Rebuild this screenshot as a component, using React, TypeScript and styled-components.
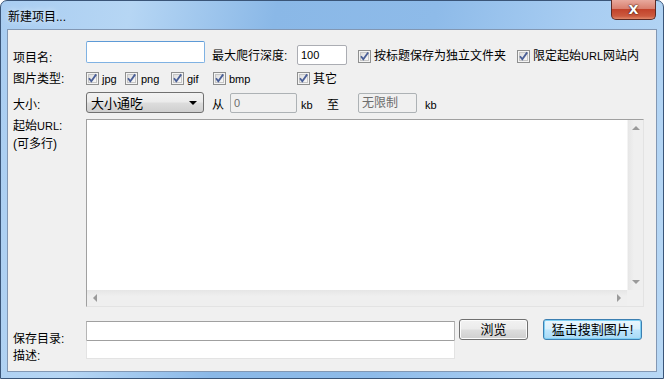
import React from "react";
import styled, { createGlobalStyle } from "styled-components";

const GlobalStyle = createGlobalStyle`
  html, body {
    margin: 0;
    padding: 0;
    overflow: hidden;
    background: #ffffff;
  }
  * { box-sizing: border-box; }
`;

const FONT = `"Liberation Sans", "Noto Sans CJK SC", sans-serif`;

const Window = styled.div`
  width: 664px;
  height: 379px;
  display: flex;
  flex-direction: column;
  padding: 0 6px 6px 6px;
  border: 1px solid #3a5578;
  border-radius: 7px 7px 0 0;
  background: linear-gradient(100deg, #a9cdf1 0%, #b6d6f4 18%, #8ab8e7 38%, #8ebbe9 60%, #a8cdf2 80%, #b8d8f5 100%);
  font-family: ${FONT};
  font-size: 12px;
  color: #000;
`;

const TitleBar = styled.div`
  height: 28px;
  display: flex;
  align-items: flex-start;
  padding-left: 1px;
`;

const Title = styled.span`
  margin-top: 9px;
  line-height: 14px;
  font-size: 12px;
  text-shadow: 0 0 6px rgba(255, 255, 255, 0.9);
`;

const CloseButton = styled.div`
  margin-left: auto;
  margin-top: -1px;
  margin-right: 1px;
  width: 45px;
  height: 20px;
  border: 1px solid #5c2a24;
  border-top: none;
  border-radius: 0 0 5px 5px;
  background: linear-gradient(#e8a99d 0%, #d9806f 45%, #c2432b 50%, #cc5a3f 85%, #e08a6c 100%);
  display: flex;
  align-items: center;
  justify-content: center;
  color: #fff;
  font-family: "DejaVu Sans", sans-serif;
  font-weight: bold;
  font-size: 13px;
  text-shadow: 0 0 1px #3b1510, 0 0 2px #3b1510;
`;

const Client = styled.div`
  flex: 1;
  background: #f0f0f0;
  border: 1px solid #8297b3;
  padding: 0 0 0 5px;
  display: flex;
  flex-direction: column;
`;

const Row = styled.div<{ $top: number; $h?: number; $align?: string }>`
  display: flex;
  align-items: ${(p) => p.$align || "flex-start"};
  margin-top: ${(p) => p.$top}px;
  height: ${(p) => (p.$h ? `${p.$h}px` : "auto")};
`;

const Label = styled.span<{ $w?: number; $mt?: number; $ml?: number }>`
  display: inline-block;
  flex-shrink: 0;
  width: ${(p) => (p.$w ? `${p.$w}px` : "auto")};
  margin-top: ${(p) => p.$mt || 0}px;
  margin-left: ${(p) => p.$ml || 0}px;
  line-height: 14px;
  white-space: nowrap;
`;

const LabelStack = styled.div<{ $mt?: number; $lh: number }>`
  width: 73px;
  flex-shrink: 0;
  display: flex;
  flex-direction: column;
  margin-top: ${(p) => p.$mt || 0}px;
  line-height: ${(p) => p.$lh}px;
`;

const TextBox = styled.div<{ $w: number; $h: number; $mt?: number; $ml?: number; $focus?: boolean; $disabled?: boolean }>`
  width: ${(p) => p.$w}px;
  height: ${(p) => p.$h}px;
  flex-shrink: 0;
  margin-top: ${(p) => p.$mt || 0}px;
  margin-left: ${(p) => p.$ml || 0}px;
  border: 1px solid ${(p) => (p.$focus ? "#7fb2e3" : p.$disabled ? "#adb2b5" : "#abadb3")};
  border-top-color: ${(p) => (p.$focus ? "#5d9ad6" : p.$disabled ? "#adb2b5" : "#abadb3")};
  border-radius: 2px;
  background: ${(p) => (p.$disabled ? "#f0f0f0" : "#ffffff")};
  color: ${(p) => (p.$disabled ? "#6d6d6d" : "#000")};
  padding: 0 3px;
  display: flex;
  align-items: center;
  line-height: 14px;
`;

const FlatBox = styled.div<{ $h: number; $last?: boolean }>`
  width: 369px;
  height: ${(p) => p.$h}px;
  background: #fff;
  border: 1px solid #b5b5b5;
  border-bottom: ${(p) => (p.$last ? "1px solid #e3e3e3" : "none")};
  border-left-color: ${(p) => (p.$last ? "#e3e3e3" : "#b5b5b5")};
  border-right-color: ${(p) => (p.$last ? "#e3e3e3" : "#b5b5b5")};
  border-top-color: #a0a0a0;
`;

const Check = styled.label<{ $w?: number; $mt?: number; $ml?: number }>`
  display: inline-flex;
  align-items: center;
  flex-shrink: 0;
  gap: 3px;
  width: ${(p) => (p.$w ? `${p.$w}px` : "auto")};
  margin-top: ${(p) => p.$mt || 0}px;
  margin-left: ${(p) => p.$ml || 0}px;
  line-height: 14px;
  white-space: nowrap;
`;

const Latin = styled.span`
  font-family: "Liberation Sans", sans-serif;
  font-size: 11px;
`;

const CheckBox: React.FC = () => (
  <svg width="13" height="13" viewBox="0 0 13 13">
    <defs>
      <linearGradient id="cbg" x1="0" y1="0" x2="1" y2="1">
        <stop offset="0" stopColor="#dcdcdc" />
        <stop offset="1" stopColor="#fbfbfb" />
      </linearGradient>
    </defs>
    <rect x="0.5" y="0.5" width="12" height="12" fill="#f4f4f4" stroke="#8e8f8f" />
    <rect x="2.5" y="2.5" width="8" height="8" fill="url(#cbg)" stroke="#c6c6c6" />
    <path d="M3 6.2 L5.3 9.2 L10.2 2.4" fill="none" stroke="#4a5f97" strokeWidth="1.8" />
  </svg>
);

const CheckItem: React.FC<{ children: React.ReactNode; w?: number; mt?: number; ml?: number }> = ({ children, w, mt, ml }) => (
  <Check $w={w} $mt={mt} $ml={ml}>
    <CheckBox />
    <span>{children}</span>
  </Check>
);

const Combo = styled.div`
  width: 118px;
  height: 21px;
  flex-shrink: 0;
  border: 1px solid #707070;
  border-radius: 3px;
  background: linear-gradient(#f2f2f2 0%, #ebebeb 48%, #dddddd 52%, #cfcfcf 100%);
  display: flex;
  align-items: center;
  padding: 0 6px 0 4px;
  font-size: 13px;
  justify-content: space-between;
`;

const Arrow = styled.span`
  width: 0;
  height: 0;
  border-left: 4px solid transparent;
  border-right: 4px solid transparent;
  border-top: 4px solid #000;
`;

const UrlRow = styled.div`
  display: flex;
  margin-top: 6px;
`;

const TextArea = styled.div`
  width: 558px;
  height: 188px;
  flex-shrink: 0;
  border: 1px solid #a0a0a0;
  border-right-color: #e3e3e3;
  border-bottom-color: #e3e3e3;
  background: #fff;
  display: grid;
  grid-template-columns: 1fr 16px;
  grid-template-rows: 1fr 16px;
`;

const VScroll = styled.div`
  background: linear-gradient(90deg, #e6e6e6, #efefef 40%, #efefef);
  border-left: 1px solid #f4f4f4;
  display: flex;
  flex-direction: column;
  justify-content: space-between;
  align-items: center;
  padding: 6px 0;
`;

const HScroll = styled.div`
  background: linear-gradient(#e6e6e6, #efefef 40%, #efefef);
  display: flex;
  justify-content: space-between;
  align-items: center;
  padding: 0 6px;
`;

const Corner = styled.div`
  background: #f0f0f0;
`;

const Tri = styled.span<{ $dir: "up" | "down" | "left" | "right" }>`
  width: 0;
  height: 0;
  ${(p) =>
    p.$dir === "up"
      ? "border-left: 4px solid transparent; border-right: 4px solid transparent; border-bottom: 4px solid #9a9a9a;"
      : p.$dir === "down"
      ? "border-left: 4px solid transparent; border-right: 4px solid transparent; border-top: 4px solid #9a9a9a;"
      : p.$dir === "left"
      ? "border-top: 4px solid transparent; border-bottom: 4px solid transparent; border-right: 4px solid #9a9a9a;"
      : "border-top: 4px solid transparent; border-bottom: 4px solid transparent; border-left: 4px solid #9a9a9a;"}
`;

const Stack = styled.div<{ $mt?: number }>`
  display: flex;
  flex-direction: column;
  margin-top: ${(p) => p.$mt || 0}px;
`;

const Button = styled.div<{ $w: number; $ml: number; $default?: boolean }>`
  width: ${(p) => p.$w}px;
  height: 21px;
  margin-left: ${(p) => p.$ml}px;
  flex-shrink: 0;
  border: 1px solid ${(p) => (p.$default ? "#3c7fb1" : "#707070")};
  border-radius: 3px;
  background: ${(p) =>
    p.$default
      ? "linear-gradient(#eaf6fd 0%, #d9f0fc 48%, #bee6fd 52%, #a7d9f5 100%)"
      : "linear-gradient(#f2f2f2 0%, #ebebeb 48%, #dddddd 52%, #cfcfcf 100%)"};
  box-shadow: ${(p) => (p.$default ? "inset 0 0 0 1px #7fd0f5" : "inset 0 0 0 1px #fcfcfc")};
  display: flex;
  align-items: center;
  justify-content: center;
  font-size: 13px;
  line-height: 14px;
`;

const App: React.FC = () => {
  return (
    <>
      <GlobalStyle />
      <Window>
        <TitleBar>
          <Title>新建项目...</Title>
          <CloseButton>X</CloseButton>
        </TitleBar>
        <Client>
          <Row $top={11} $h={24}>
            <Label $w={73} $mt={10}>项目名:</Label>
            <TextBox $w={119} $h={22} $focus />
            <Label $w={85} $mt={8} $ml={7}>最大爬行深度:</Label>
            <TextBox $w={50} $h={20} $mt={4}><Latin>100</Latin></TextBox>
            <CheckItem ml={11} mt={8} w={148}>按标题保存为独立文件夹</CheckItem>
            <CheckItem ml={11} mt={8}>限定起始<Latin>URL</Latin>网站内</CheckItem>
          </Row>
          <Row $top={6} $h={15} $align="center">
            <Label $w={73}>图片类型:</Label>
            <CheckItem w={39}><Latin>jpg</Latin></CheckItem>
            <CheckItem w={46}><Latin>png</Latin></CheckItem>
            <CheckItem w={42}><Latin>gif</Latin></CheckItem>
            <CheckItem w={84}><Latin>bmp</Latin></CheckItem>
            <CheckItem>其它</CheckItem>
          </Row>
          <Row $top={6} $h={21} $align="center">
            <Label $w={73} $mt={4}>大小:</Label>
            <Combo>
              <span>大小通吃</span>
              <Arrow />
            </Combo>
            <Label $w={18} $ml={8} $mt={4}>从</Label>
            <TextBox $w={67} $h={20} $disabled><Latin>0</Latin></TextBox>
            <Label $w={26} $ml={4} $mt={4}><Latin>kb</Latin></Label>
            <Label $w={31} $mt={4}>至</Label>
            <TextBox $w={59} $h={20} $disabled>无限制</TextBox>
            <Label $ml={8} $mt={4}><Latin>kb</Latin></Label>
          </Row>
          <UrlRow>
            <LabelStack $lh={18} $mt={-2}>
              <span>起始<Latin>URL</Latin>:</span>
              <span>(可多行)</span>
            </LabelStack>
            <TextArea>
              <div />
              <VScroll>
                <Tri $dir="up" />
                <Tri $dir="down" />
              </VScroll>
              <HScroll>
                <Tri $dir="left" />
                <Tri $dir="right" />
              </HScroll>
              <Corner />
            </TextArea>
          </UrlRow>
          <Row $top={12}>
            <LabelStack $lh={17} $mt={12}>
              <span>保存目录:</span>
              <span>描述:</span>
            </LabelStack>
            <Stack $mt={2}>
              <FlatBox $h={19} />
              <FlatBox $h={19} $last />
            </Stack>
            <Button $w={69} $ml={4}>浏览</Button>
            <Button $w={99} $ml={15} $default>猛击搜割图片!</Button>
          </Row>
        </Client>
      </Window>
    </>
  );
};

export default App;
